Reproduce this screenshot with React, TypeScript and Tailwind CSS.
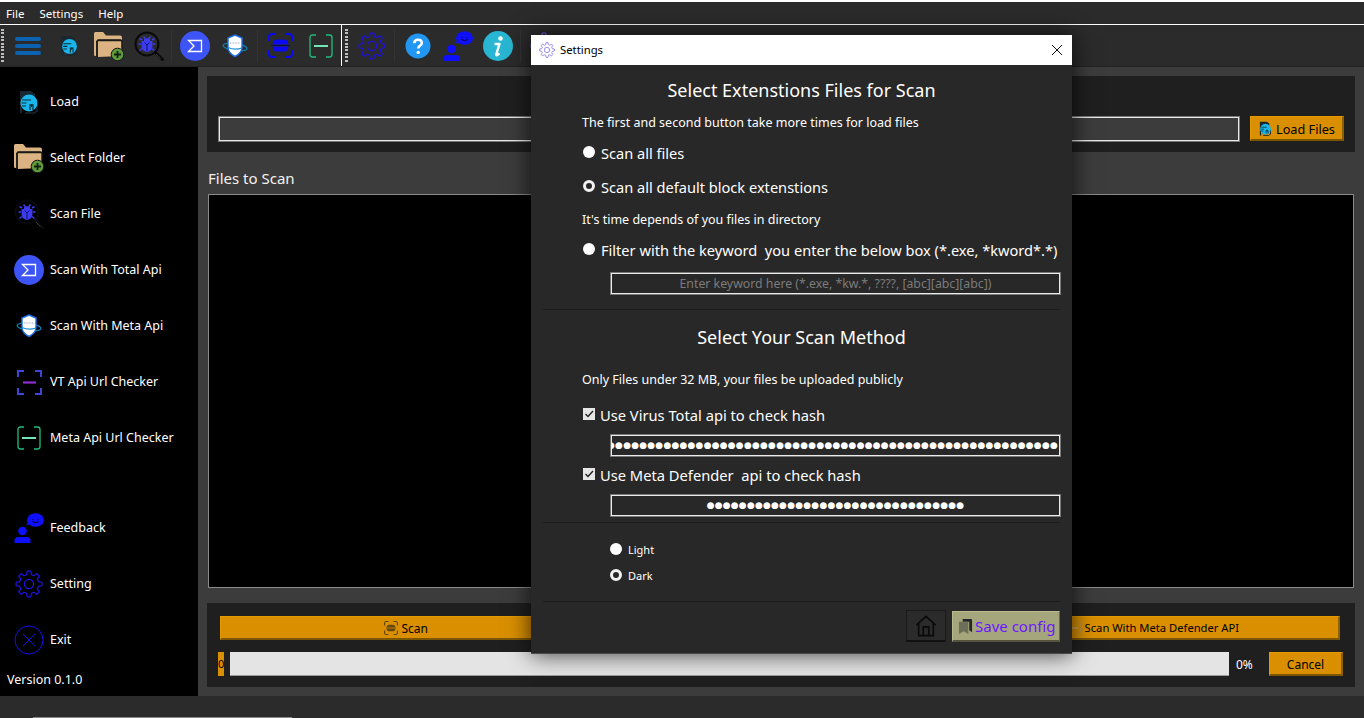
import React from "react";

const gearPath = (cx: number, cy: number, ro: number, ri: number, n = 8) => {
  const pts: string[] = [];
  const step = (Math.PI * 2) / n;
  for (let i = 0; i < n; i++) {
    const a = i * step - Math.PI / 2;
    const w = step * 0.17;
    const g = step * 0.33;
    const p = (r: number, t: number) => `${(cx + r * Math.cos(t)).toFixed(2)} ${(cy + r * Math.sin(t)).toFixed(2)}`;
    pts.push(p(ri, a - g), p(ro, a - w), p(ro, a + w), p(ri, a + g));
  }
  return "M" + pts.join("L") + "Z";
};

type IP = { className?: string };

const Hamburger = ({ className }: IP) => (
  <svg className={className} viewBox="0 0 26 18" fill="#0b62b0">
    <rect x="0" y="0" width="26" height="4" rx="2" />
    <rect x="0" y="7" width="26" height="4" rx="2" />
    <rect x="0" y="14" width="26" height="4" rx="2" />
  </svg>
);

const LoadIcon = ({ className }: IP) => (
  <svg className={className} viewBox="0 0 24 24">
    <path d="M3 1h11l4 3v5H5v14H3z" fill="#1b2730" />
    <path d="M20 14v7l-3 2H8" fill="none" stroke="#1b2730" strokeWidth="1.5" />
    <circle cx="12" cy="13" r="8.5" fill="#18b6ea" />
    <path d="M5 10h9M4.500 13h5M5 16h4" stroke="#10303f" strokeWidth="1.200" />
    <path d="M13 20v-5h3v5" fill="none" stroke="#10303f" strokeWidth="1.300" />
    <path d="M14.500 14v3" stroke="#10303f" strokeWidth="1" />
  </svg>
);

const FolderIcon = ({ className }: IP) => (
  <svg className={className} viewBox="0 0 30 30">
    <path d="M0 2.500Q0 1 1.500 1H9l3 3.500h14q2 0 2 2V25H1.500Q0 25 0 24z" fill="#dcb483" />
    <path d="M3 26V11q0-2 2-2h21q2 0 2 2v7" fill="none" stroke="#1a1a1a" strokeWidth="1.500" />
    <path d="M4 26V11q0-1 1-1h21q1 0 1 1v14z" fill="#dcb483" />
    <path d="M3 9.500h24" stroke="#1a1a1a" strokeWidth="1.500" />
    <path d="M3 10v15" stroke="#1a1a1a" strokeWidth="1.500" />
    <circle cx="23.500" cy="23.500" r="6.300" fill="#5d9b3c" stroke="#141414" strokeWidth="1" />
    <path d="M23.500 20v7M20 23.500h7" stroke="#12220d" strokeWidth="1.800" />
  </svg>
);

const BugIcon = ({ className }: IP) => (
  <svg className={className} viewBox="0 0 30 30">
    <circle cx="13" cy="13" r="11.500" fill="none" stroke="#0a0a0a" strokeWidth="2" />
    <path d="M21.500 21.500l7 7" stroke="#0a0a0a" strokeWidth="3" strokeLinecap="round" />
    <path d="M22 23l4.500 4.500" stroke="#3a3a3a" strokeWidth="1" />
    <g stroke="#3b3bf0" strokeWidth="1.500" fill="none">
      <path d="M9.500 5.500l2 2.500M16.500 5.500l-2 2.500" />
      <path d="M8 9L5.500 7.500M18 9l2.500-1.500M7 13H4.500M19 13h2.500M8 17.500l-2.500 2M18 17.500l2.500 2" />
    </g>
    <path d="M10 8.500q3-2.500 6 0v1.500h-6z" fill="#3b3bf0" />
    <path d="M7.500 11q0-1 1-1h9q1 0 1 1v4q0 5-5.500 6-5.500-1-5.500-6z" fill="#3b3bf0" />
    <path d="M10.500 11.500l2.500 2.500 2.500-2.500M13 14v6" stroke="#12126a" strokeWidth="1" fill="none" />
  </svg>
);

const SigmaIcon = ({ className }: IP) => (
  <svg className={className} viewBox="0 0 30 30">
    <circle cx="15" cy="15" r="15" fill="#3d55f6" />
    <path d="M8.500 9.500H21.500V20.500H8.500L14 15z" fill="none" stroke="#fff" strokeWidth="1.300" />
  </svg>
);

const ShieldIcon = ({ className }: IP) => (
  <svg className={className} viewBox="0 0 26 26">
    <ellipse cx="13" cy="14" rx="12" ry="3.600" fill="none" stroke="#0e7fb0" strokeWidth="1.200" transform="rotate(8 13 14)" />
    <path d="M13 2l7 3v9q0 6-7 9.500Q6 20 6 14V5z" fill="#fff" stroke="#1c6fe8" strokeWidth="1.400" />
    <path d="M8 10h10" stroke="#cfd6df" strokeWidth="2" strokeDasharray="1 0.6" />
    <path d="M6 14.500q7 3 14 .5" fill="none" stroke="#1c8fd8" strokeWidth="1.200" />
  </svg>
);

const VtToolIcon = ({ className }: IP) => (
  <svg className={className} viewBox="0 0 25 25">
    <path d="M1 8V4q0-3 3-3h4M17 1h4q3 0 3 3v4M24 17v4q0 3-3 3h-4M8 24H4q-3 0-3-3v-4" fill="none" stroke="#0a0af5" strokeWidth="2" />
    <path d="M4.500 11.500q.5-5 4.500-5h7q4 0 4.500 5zM4.500 13.500h16q-.5 5-4.500 5H9q-4 0-4.500-5z" fill="#0a0af5" />
    <path d="M3 12.500h19" stroke="#0a0a40" strokeWidth="0.800" />
  </svg>
);

const VtSideIcon = ({ className }: IP) => (
  <svg className={className} viewBox="0 0 25 25">
    <path d="M1 7V1h6M18 1h6v6M24 18v6h-6M7 24H1v-6" fill="none" stroke="#3a47d8" strokeWidth="2" />
    <path d="M6 12.500h13" stroke="#8f2ed6" strokeWidth="2.200" />
  </svg>
);

const MetaIcon = ({ className }: IP) => (
  <svg className={className} viewBox="0 0 24 24">
    <path d="M7 1H3.500Q1 1 1 3.500v17Q1 23 3.500 23H7M17 1h3.500Q23 1 23 3.500v17q0 2.500-2.500 2.500H17" fill="none" stroke="#1fbd80" strokeWidth="1.300" />
    <path d="M5 12h14" stroke="#73e6b6" strokeWidth="2" />
  </svg>
);

const Gear = ({ className, color = "#1d12e6" }: IP & { color?: string }) => (
  <svg className={className} viewBox="0 0 28 28">
    <path d={gearPath(14, 14, 13, 9.600)} fill="none" stroke={color} strokeWidth="1.200" strokeLinejoin="round" />
    <circle cx="14" cy="14" r="4.600" fill="none" stroke={color} strokeWidth="1.200" />
  </svg>
);

const HelpIcon = ({ className }: IP) => (
  <svg className={className} viewBox="0 0 26 26">
    <circle cx="13" cy="13" r="12.500" fill="#2196f3" />
    <path d="M9.300 10.200q0-3.400 3.800-3.400 3.700 0 3.700 3.100 0 1.900-2 3-1.500.9-1.500 2.600" fill="none" stroke="#fff" strokeWidth="2.500" />
    <circle cx="13.200" cy="19.400" r="1.700" fill="#fff" />
  </svg>
);

const FeedbackIcon = ({ className }: IP) => (
  <svg className={className} viewBox="0 0 30 30">
    <ellipse cx="21.500" cy="7" rx="8.500" ry="6.800" fill="#0f0fff" />
    <path d="M14.500 9l-2.500 3.500 5-1.500z" fill="#0f0fff" />
    <path d="M19 6v.8M24 6v.8M18.500 8.500q3 2.500 6 0" fill="none" stroke="#000" strokeWidth="0.900" />
    <circle cx="8.500" cy="18" r="4.300" fill="#0f0fff" />
    <path d="M0.500 30v-2.500q0-3.500 3.500-3.500h9q3.500 0 3.500 3.500V30z" fill="#0f0fff" />
  </svg>
);

const InfoIcon = ({ className }: IP) => (
  <svg className={className} viewBox="0 0 30 30">
    <circle cx="15" cy="15" r="15" fill="#29b6d2" />
    <circle cx="17.500" cy="7.500" r="2.300" fill="#fff" />
    <path d="M11.500 13h5l-3.300 10.500q-.3 1 .8 .7l2.500-1.700" fill="none" stroke="#fff" strokeWidth="2.400" strokeLinejoin="round" />
  </svg>
);

const ExitIcon = ({ className }: IP) => (
  <svg className={className} viewBox="0 0 30 30">
    <circle cx="15" cy="15" r="14" fill="none" stroke="#1511e8" strokeWidth="1" />
    <path d="M9 9l12 12M21 9L9 21" stroke="#1511e8" strokeWidth="1" />
  </svg>
);

const HomeIcon = ({ className }: IP) => (
  <svg className={className} viewBox="0 0 24 24">
    <path d="M1.500 11L12 1.500 22.500 11M4 9v13.500h16V9" fill="none" stroke="#0a0a0a" strokeWidth="1.800" />
    <path d="M9 22.500V13h6v9.500" fill="none" stroke="#0a0a0a" strokeWidth="1.800" />
  </svg>
);

const SaveIcon = ({ className }: IP) => (
  <svg className={className} viewBox="0 0 16 18">
    <path d="M5 1h9q1 0 1 1v13l-3-2V4H5z" fill="#24272a" />
    <path d="M1 4h9q1 0 1 1v12l-5-3-5 3z" fill="#6c7058" />
  </svg>
);

const Handle = ({ className }: IP) => (
  <div className={`w-[3px] h-[33px] bg-[repeating-linear-gradient(to_bottom,#bdbdbd_0,#bdbdbd_2px,transparent_2px,transparent_3.400px)] ${className ?? ""}`} />
);
const Sep = ({ className }: IP) => <div className={`w-px h-[32px] bg-[#333] ${className ?? ""}`} />;

const Side = ({ icon, label }: { icon: React.ReactNode; label: string }) => (
  <div className="h-14 flex items-center">
    <div className="w-[30px] h-[30px] ml-[14px] mr-[6px] flex items-center justify-center">{icon}</div>
    <span className="text-white text-[12.500px]">{label}</span>
  </div>
);

const OrangeBtn = ({ children, className }: { children: React.ReactNode; className?: string }) => (
  <div className={`bg-[#d98f00] border border-[#e59a00] border-b-2 border-r-2 border-b-[#7b5600] border-r-[#8a6000] text-black flex items-center justify-center ${className ?? ""}`}>
    {children}
  </div>
);

const Radio = ({ on }: { on?: boolean }) => (
  <span className={`w-[12px] h-[12px] -mt-[2px] shrink-0 rounded-full ${on ? "border-[3px] border-[#f2f2f2] bg-[#282828]" : "bg-white"}`} />
);

const Check = () => (
  <span className="w-[12px] h-[12px] -mt-[2px] shrink-0 bg-[#e6e6e6] flex items-center justify-center">
    <svg viewBox="0 0 12 12" className="w-[12px] h-[12px]">
      <path d="M2.500 6l2.500 2.500L10 3" fill="none" stroke="#222" strokeWidth="1.400" />
    </svg>
  </span>
);

const Divider = () => <div className="h-px bg-[#1b1b1b] mx-[12px]" />;

const Dots = ({ n, right }: { n: number; right?: boolean }) => (
  <div className={`mt-[2px] ml-[79px] w-[451px] h-[23px] shrink-0 border-2 border-[#ececec] outline outline-1 outline-[#777] -outline-offset-1 flex items-center overflow-hidden ${right ? "justify-end pr-[1px]" : "justify-center"}`}>
    <span className="text-white [font-family:'DejaVu_Sans',sans-serif] text-[9px] leading-none tracking-[0.200px] whitespace-nowrap shrink-0">{"●".repeat(n)}</span>
  </div>
);

export default function App() {
  return (
    <div className="relative w-[1364px] h-[718px] overflow-hidden bg-[#2b2b2b] [font-family:'Noto_Sans',sans-serif] flex flex-col">
      <div className="h-[2px] bg-white shrink-0" />
      {/* menu */}
      <div className="h-[22px] shrink-0 flex items-center text-white text-[11.500px] pl-[6px] pt-[1px] gap-[12px]">
        <span>File</span>
        <span className="ml-[3px]">Settings</span>
        <span className="ml-[3px]">Help</span>
      </div>
      {/* toolbar */}
      <div className="h-[43px] shrink-0 flex border-b border-[#222]">
        <div className="w-[342px] shrink-0 border-t border-r border-white flex items-center">
          <Handle className="ml-[1px]" />
          <Hamburger className="w-[26px] h-[18px] ml-[11px]" />
          <LoadIcon className="w-[21px] h-[21px] ml-[18px]" />
          <FolderIcon className="w-[30px] h-[30px] ml-[14px]" />
          <BugIcon className="w-[30px] h-[30px] ml-[10px]" />
          <Sep className="ml-[7px]" />
          <SigmaIcon className="w-[30px] h-[30px] ml-[8px]" />
          <ShieldIcon className="w-[26px] h-[26px] ml-[12px]" />
          <Sep className="ml-[9px]" />
          <VtToolIcon className="w-[25px] h-[25px] ml-[10px]" />
          <MetaIcon className="w-[24px] h-[24px] ml-[16px]" />
        </div>
        <div className="flex-1 border-t border-white flex items-center">
          <Handle className="ml-[3px]" />
          <Gear className="w-[28px] h-[28px] ml-[10px]" />
          <Sep className="ml-[8px]" />
          <HelpIcon className="w-[26px] h-[26px] ml-[10px]" />
          <FeedbackIcon className="w-[30px] h-[30px] ml-[12px]" />
          <InfoIcon className="w-[30px] h-[30px] ml-[10px]" />
          <Sep className="ml-[7px]" />
          <Gear className="w-[28px] h-[28px] ml-[9px]" color="#6a5ae0" />
        </div>
      </div>
      {/* body */}
      <div className="h-[629px] shrink-0 flex">
        <aside className="w-[198px] shrink-0 bg-black flex flex-col pt-[7px]">
          <Side icon={<LoadIcon className="w-[24px] h-[24px]" />} label="Load" />
          <Side icon={<FolderIcon className="w-[30px] h-[30px]" />} label="Select Folder" />
          <Side icon={<BugIcon className="w-[30px] h-[30px]" />} label="Scan File" />
          <Side icon={<SigmaIcon className="w-[30px] h-[30px]" />} label="Scan With Total Api" />
          <Side icon={<ShieldIcon className="w-[26px] h-[26px]" />} label="Scan With Meta Api" />
          <Side icon={<VtSideIcon className="w-[25px] h-[25px]" />} label="VT Api Url Checker" />
          <Side icon={<MetaIcon className="w-[24px] h-[24px]" />} label="Meta Api Url Checker" />
          <div className="h-[34px]" />
          <Side icon={<FeedbackIcon className="w-[30px] h-[30px]" />} label="Feedback" />
          <Side icon={<Gear className="w-[28px] h-[28px]" />} label="Setting" />
          <Side icon={<ExitIcon className="w-[30px] h-[30px]" />} label="Exit" />
          <div className="text-white text-[12.500px] pl-[7px] mt-[3px]">Version 0.1.0</div>
        </aside>
        <main className="flex-1 min-w-0 bg-[#3c3c3c] pl-[9px] pr-[9px] pt-[9px] flex flex-col">
          <div className="h-[76px] bg-[#1f1f1f] pl-[11px] pr-[11px] pt-[40px] flex items-start">
            <input readOnly className="flex-1 min-w-0 h-[26px] bg-[#3c3c3c] border-2 border-[#e8e8e8] outline outline-1 outline-[#777] -outline-offset-1" />
            <OrangeBtn className="ml-[10px] w-[94px] h-[25px] gap-[3px] text-[12.700px]">
              <LoadIcon className="w-[15px] h-[15px]" />
              <span className="pt-[3px]">Load Files</span>
            </OrangeBtn>
          </div>
          <div className="h-[42px] pt-[16px] pl-[1px] text-[#f2f2f2] text-[15px] leading-[20px]">Files to Scan</div>
          <div className="h-[394px] bg-black border border-[#8a8a8a] ml-[1px] mr-[1px]" />
          <div className="mt-[15px] h-[84px] bg-[#1f1f1f] pt-[13px] pl-[13px] pr-[15px]">
            <div className="flex h-[24px]">
              <OrangeBtn className="flex-1 gap-[3px] text-[12px]">
                <VtToolIcon className="w-[14px] h-[14px] opacity-60 grayscale" />
                <span className="pt-[2px]">Scan</span>
              </OrangeBtn>
              <OrangeBtn className="flex-1 gap-[3px] text-[11.200px]">
                <VtToolIcon className="w-[14px] h-[14px] opacity-60 grayscale" />
                <span className="pt-[2px]">Scan With Virus Total API</span>
              </OrangeBtn>
              <OrangeBtn className="flex-1 gap-[4px] text-[11.200px]">
                <MetaIcon className="w-[14px] h-[14px] opacity-60 grayscale" />
                <span className="pt-[2px]">Scan With Meta Defender API</span>
              </OrangeBtn>
            </div>
            <div className="flex items-start h-[24px] mt-[12px] -ml-[2px]">
              <div className="w-[6px] h-[24px] bg-[#d98f00] text-black text-[11px] leading-[24px] overflow-hidden shrink-0">0</div>
              <div className="ml-[6px] w-[999px] h-[24px] shrink-0 bg-[#e4e4e4] border-b border-[#9a9a9a]" />
              <span className="ml-[7px] w-[33px] shrink-0 text-white text-[12px] leading-[26px]">0%</span>
              <OrangeBtn className="w-[74px] h-[24px] shrink-0 text-[12px]"><span className="pt-[2px]">Cancel</span></OrangeBtn>
            </div>
          </div>
        </main>
      </div>
      {/* status strip */}
      <div className="flex-1 pt-[21px] pl-[33px]">
        <div className="w-[259px] h-px bg-[#8a8a8a]" />
      </div>

      {/* modal dialog */}
      <section className="absolute left-[531px] top-[35px] w-[541px] h-[619px] bg-[#282828] shadow-[0_0_22px_rgba(0,0,0,0.75)] border-b border-[#4a4a4a] flex flex-col">
        <header className="h-[30px] shrink-0 bg-white flex items-center pl-[8px] pr-[9px] text-black text-[11.300px]">
          <Gear className="w-[16px] h-[16px]" color="#6f5ce8" />
          <span className="ml-[5px]">Settings</span>
          <svg viewBox="0 0 12 12" className="w-[12px] h-[12px] ml-auto">
            <path d="M1 1l10 10M11 1L1 11" stroke="#111" strokeWidth="1" />
          </svg>
        </header>
        <div className="h-[50px] shrink-0 flex items-center justify-center text-white text-[18px]">Select Extenstions Files for Scan</div>
        <div className="h-[14px] shrink-0 flex items-center pl-[51px] pt-[2px] text-white text-[12.500px] whitespace-nowrap">The first and second button take more times for load files</div>
        <div className="h-[34px] mt-[7px] shrink-0 flex items-center pl-[52px] text-white text-[14.600px]">
          <Radio /><span className="ml-[6px] pt-[2px]">Scan all files</span>
        </div>
        <div className="h-[34px] shrink-0 flex items-center pl-[52px] text-white text-[14.600px]">
          <Radio on /><span className="ml-[6px] pt-[2px]">Scan all default block extenstions</span>
        </div>
        <div className="h-[30px] shrink-0 flex items-center pl-[51px] pt-[2px] text-white text-[12.500px]">It's time depends of you files in directory</div>
        <div className="h-[32px] shrink-0 flex items-center pl-[52px] text-white text-[14.600px] whitespace-pre">
          <Radio /><span className="ml-[6px] pt-[1px]">Filter with the keyword  you enter the below box (*.exe, *kword*.*)</span>
        </div>
        <input
          readOnly
          placeholder="Enter keyword here (*.exe, *kw.*, ????, [abc][abc][abc])"
          className="mt-[6px] ml-[79px] w-[451px] h-[23px] shrink-0 bg-[#282828] border-2 border-[#ececec] outline outline-1 outline-[#777] -outline-offset-1 text-center text-[12.300px] placeholder:text-[#7b7b7b]"
        />
        <div className="mt-[14px]"><Divider /></div>
        <div className="h-[54px] shrink-0 flex items-center justify-center text-white text-[18px]">Select Your Scan Method</div>
        <div className="h-[30px] shrink-0 flex items-center pl-[51px] pt-[2px] text-white text-[12.500px]">Only Files under 32 MB, your files be uploaded publicly</div>
        <div className="h-[34px] mt-[4px] shrink-0 flex items-center pl-[52px] text-white text-[14.700px]">
          <Check /><span className="ml-[5px]">Use Virus Total api to check hash</span>
        </div>
        <Dots n={57} right />
        <div className="h-[34px] mt-[1px] shrink-0 flex items-center pl-[52px] text-white text-[14.700px] whitespace-pre">
          <Check /><span className="ml-[5px]">Use Meta Defender  api to check hash</span>
        </div>
        <Dots n={32} />
        <div className="mt-[5px]"><Divider /></div>
        <div className="h-[26px] mt-[14px] shrink-0 flex items-center pl-[79px] text-white text-[11px]">
          <Radio /><span className="ml-[6px]">Light</span>
        </div>
        <div className="h-[26px] shrink-0 flex items-center pl-[79px] text-white text-[11px]">
          <Radio on /><span className="ml-[6px]">Dark</span>
        </div>
        <div className="mt-[12px]"><Divider /></div>
        <div className="flex-1 flex justify-end pr-[12px] pt-[8px] gap-[6px]">
          <div className="w-[40px] h-[32px] bg-[#2b2b2b] border border-[#1a1a1a] border-b-2 border-b-[#111] flex items-center justify-center">
            <HomeIcon className="w-[22px] h-[22px]" />
          </div>
          <div className="w-[108px] h-[31px] mt-[1px] bg-[#a6a67c] border border-[#b9b98e] border-b-2 border-b-[#55553d] border-r-[#66664a] flex items-center pl-[5px] text-[#6a17ff] text-[15px] whitespace-nowrap">
            <SaveIcon className="w-[15px] h-[17px]" />
            <span className="ml-[2px]">Save config</span>
          </div>
        </div>
      </section>
    </div>
  );
}
